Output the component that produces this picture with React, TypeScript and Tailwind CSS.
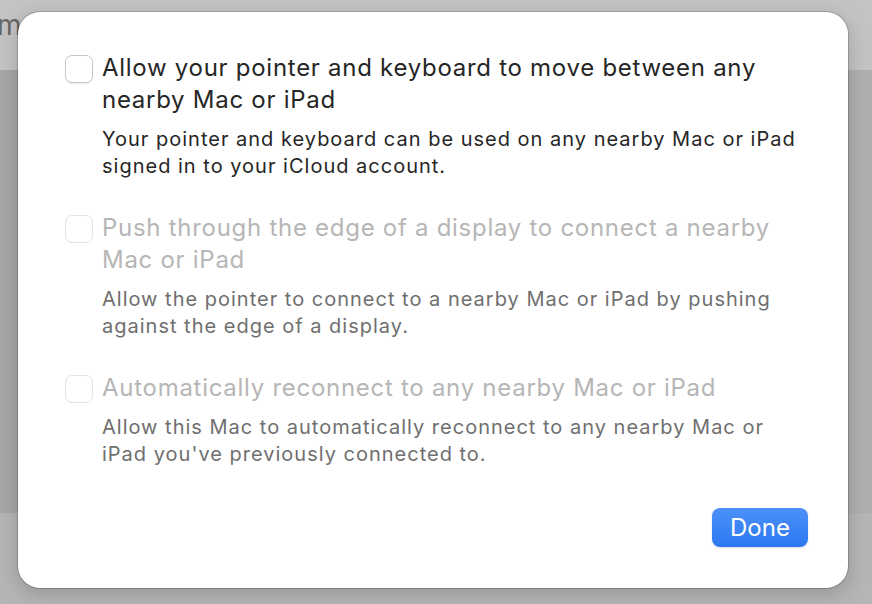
const font = { fontFamily: 'Inter, "Liberation Sans", sans-serif' }

function Check({ disabled }: { disabled?: boolean }) {
  return (
    <div
      className={
        'w-[28px] h-[28px] shrink-0 rounded-[7px] bg-white border ' +
        (disabled ? 'border-[#e2e2e2]' : 'border-[#c6c6c6] shadow-[0_1px_1px_rgba(0,0,0,0.08)]')
      }
    />
  )
}

function Option({
  title,
  desc,
  disabled,
  className,
}: {
  title: React.ReactNode
  desc: React.ReactNode
  disabled?: boolean
  className?: string
}) {
  return (
    <div className={'flex gap-[9px] ' + (className || '')}>
      <div className="pt-[3px]">
        <Check disabled={disabled} />
      </div>
      <div className="flex flex-col">
        <div
          className={
            'text-[24px] leading-[32px] tracking-[0.72px] ' + (disabled ? 'text-[#b6b6b6]' : 'text-[#262626]')
          }
        >
          {title}
        </div>
        <div
          className={
            'mt-[10px] text-[20px] leading-[27px] tracking-[1px] ' + (disabled ? 'text-[#6f6f6f]' : 'text-[#262626]')
          }
        >
          {desc}
        </div>
      </div>
    </div>
  )
}

export default function App() {
  return (
    <div className="relative w-[872px] h-[604px] overflow-hidden" style={font}>
      <div className="flex flex-col h-full">
        <div className="h-[70px] bg-[#c3c3c3] overflow-hidden">
          <div className="whitespace-nowrap text-[28px] leading-[34px] text-[#666666] ml-[-3px] mt-[8px]">
            ments with the same Apple ID, nearby Mac or iPad, link to iPad
          </div>
        </div>
        <div className="h-[443px] bg-gradient-to-r from-[#a7a7a7] via-[#ababab] to-[#afafaf]" />
        <div className="flex-1 bg-[#b5b5b5]" />
      </div>

      <div className="absolute left-[18px] top-[12px] w-[830px] h-[576px] rounded-[22px] bg-white shadow-[0_0_0_1px_rgba(0,0,0,0.18),0_6px_20px_rgba(0,0,0,0.18)] flex flex-col pl-[47px] pr-[40px] pt-[40px] pb-[41px]">
        <Option
          title={<>Allow your pointer and keyboard to move between any<br />nearby Mac or iPad</>}
          desc={<>Your pointer and keyboard can be used on any nearby Mac or iPad<br />signed in to your iCloud account.</>}
        />
        <Option
          className="mt-[32px]"
          disabled
          title={<>Push through the edge of a display to connect a nearby<br />Mac or iPad</>}
          desc={<>Allow the pointer to connect to a nearby Mac or iPad by pushing<br />against the edge of a display.</>}
        />
        <Option
          className="mt-[32px]"
          disabled
          title={<>Automatically reconnect to any nearby Mac or iPad</>}
          desc={<>Allow this Mac to automatically reconnect to any nearby Mac or<br />iPad you've previously connected to.</>}
        />
        <div className="flex-1" />
        <div className="flex justify-end">
          <button className="w-[96px] h-[39px] rounded-[8px] bg-gradient-to-b from-[#4b91fa] to-[#2d78f1] text-white text-[24px] leading-[39px] shadow-[0_1px_2px_rgba(0,0,0,0.15)]">
            Done
          </button>
        </div>
      </div>
    </div>
  )
}
